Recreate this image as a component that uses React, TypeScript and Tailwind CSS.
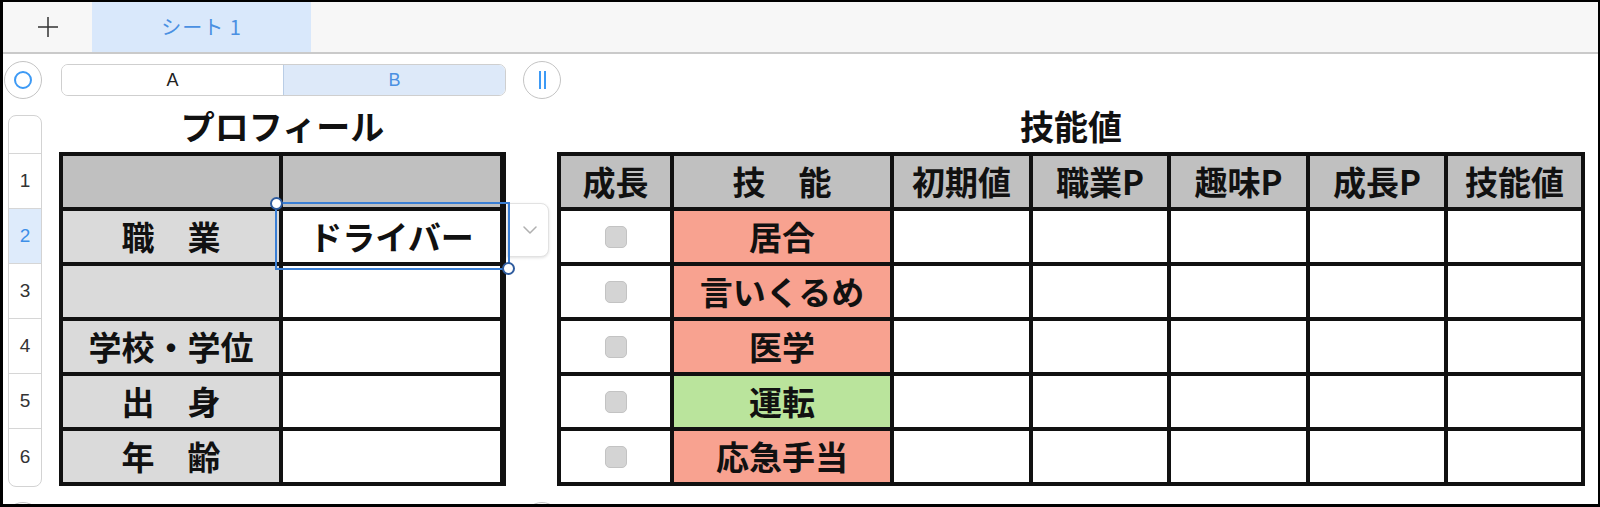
import React from 'react';

const JP = { fontFamily: '"Noto Sans CJK JP", "Noto Sans", sans-serif' };

const PROFILE_LABELS = ['', '職　業', '', '学校・学位', '出　身', '年　齢'];

const SKILL_HEADERS = ['成長', '技　能', '初期値', '職業P', '趣味P', '成長P', '技能値'];

const SKILLS: { name: string; color: string }[] = [
  { name: '居合', color: 'bg-[#f8a290]' },
  { name: '言いくるめ', color: 'bg-[#f8a290]' },
  { name: '医学', color: 'bg-[#f8a290]' },
  { name: '運転', color: 'bg-[#bae49c]' },
  { name: '応急手当', color: 'bg-[#f8a290]' },
];

function Cell({ className = '', children }: { className?: string; children?: React.ReactNode }) {
  return (
    <div className={`flex items-center justify-center text-[33px] font-bold leading-none text-[#111] ${className}`}>
      {children}
    </div>
  );
}

function RowHeader() {
  return (
    <div className="ml-[5px] mt-[9px] w-[34px] rounded-[8px] border border-[#d3d3d3] bg-white flex flex-col overflow-hidden">
      <div className="h-[37px]" />
      {[1, 2, 3, 4, 5, 6].map(n => (
        <div
          key={n}
          className={`flex items-center justify-center border-t border-[#d6d6d6] text-[19px] ${
            n === 6 ? 'h-[58px]' : 'h-[55px]'
          } ${n === 2 ? 'bg-[#deebfb] text-[#3d8fe8]' : 'text-[#333]'}`}
          style={{ fontFamily: '"Liberation Sans", sans-serif' }}
        >
          {n}
        </div>
      ))}
    </div>
  );
}

function ProfileTable() {
  return (
    <div className="ml-[17px] w-[447px] flex flex-col">
      <div className="h-[46px] flex items-center justify-center pb-[8px] text-[34px] font-bold text-[#111]">プロフィール</div>
      <div className="relative">
        <div className="grid grid-cols-[216px_217px] auto-rows-[51px] gap-[4px] p-[4px] bg-[#111]">
          {PROFILE_LABELS.map((label, i) => (
            <React.Fragment key={i}>
              <Cell className={i === 0 ? 'bg-[#c0c0c0]' : 'bg-[#dadada]'}>{label}</Cell>
              <Cell className={i === 0 ? 'bg-[#c0c0c0]' : 'bg-white'}>{i === 1 ? 'ドライバー' : ''}</Cell>
            </React.Fragment>
          ))}
        </div>

        {/* dropdown button beside the selected cell */}
        <div className="absolute left-[448px] top-[51px] w-[42px] h-[54px] bg-white rounded-r-[8px] border border-[#e2e2e2] shadow-[0_1px_3px_rgba(0,0,0,0.12)] flex items-center justify-center pl-[4px]">
          <svg width="14" height="8" viewBox="0 0 14 8" fill="none">
            <path d="M1 1l6 6 6-6" stroke="#b0b0b0" strokeWidth="1.5" strokeLinecap="round" strokeLinejoin="round" />
          </svg>
        </div>

        {/* selection */}
        <div className="absolute left-[216px] top-[50px] w-[235px] h-[68px] border-2 border-[#3a7fd5]">
          <div className="absolute -left-[7px] -top-[7px] w-[13px] h-[13px] rounded-full bg-white border-2 border-[#2f5c9e]" />
          <div className="absolute -right-[7px] -bottom-[7px] w-[13px] h-[13px] rounded-full bg-white border-2 border-[#2f5c9e]" />
        </div>
      </div>
    </div>
  );
}

function SkillTable() {
  return (
    <div className="ml-[51px] w-[1028px] flex flex-col">
      <div className="h-[46px] flex items-center justify-center pb-[8px] text-[34px] font-bold text-[#111]">技能値</div>
      <div className="grid grid-cols-[109px_216px_135px_134px_135px_134px_133px] auto-rows-[51px] gap-[4px] p-[4px] bg-[#111]">
        {SKILL_HEADERS.map(h => (
          <Cell key={h} className="bg-[#c0c0c0]">{h}</Cell>
        ))}
        {SKILLS.map(skill => (
          <React.Fragment key={skill.name}>
            <Cell className="bg-white">
              <div className="w-[22px] h-[22px] rounded-[5px] bg-[#d4d4d4] border border-[#c3c3c3]" />
            </Cell>
            <Cell className={skill.color}>{skill.name}</Cell>
            {[0, 1, 2, 3, 4].map(k => (
              <Cell key={k} className="bg-white" />
            ))}
          </React.Fragment>
        ))}
      </div>
    </div>
  );
}

function CircleButton({ children }: { children?: React.ReactNode }) {
  return (
    <div className="w-[38px] h-[38px] rounded-full border-[1.5px] border-[#c4c4c4] bg-white flex items-center justify-center">
      {children}
    </div>
  );
}

export default function App() {
  return (
    <div className="w-[1600px] h-[507px] bg-black pt-[2px] pl-[3px] pr-[2px] pb-[3px] overflow-hidden" style={JP}>
      <div className="relative h-full bg-white overflow-hidden">
        {/* sheet tabs */}
        <div className="h-[52px] flex bg-[#f7f7f7] border-b-2 border-[#cacaca]">
          <div className="w-[89px] flex items-center justify-center">
            <svg width="22" height="22" viewBox="0 0 22 22">
              <path d="M11 1v20M1 11h20" stroke="#333" strokeWidth="1.5" />
            </svg>
          </div>
          <div className="w-[219px] bg-[#d9e8fb] flex items-center justify-center text-[20px] tracking-[1px] text-[#4a90e2]">シート 1</div>
        </div>

        {/* column headers */}
        <div className="h-[52px] flex items-center pl-[1px]">
          <CircleButton>
            <div className="w-[18px] h-[18px] rounded-full border-2 border-[#3d9af5]" />
          </CircleButton>
          <div
            className="ml-[19px] w-[445px] h-[32px] flex rounded-[7px] border border-[#cfcfcf] overflow-hidden text-[18px]"
            style={{ fontFamily: '"Liberation Sans", sans-serif' }}
          >
            <div className="w-[221px] flex items-center justify-center text-[#222] bg-white">A</div>
            <div className="flex-1 flex items-center justify-center text-[#4a90e2] bg-[#dde9f9] border-l border-[#b9cde6]">B</div>
          </div>
          <div className="ml-[17px]">
            <CircleButton>
              <div className="flex gap-[3px]">
                <div className="w-[2px] h-[18px] bg-[#3d9af5]" />
                <div className="w-[2px] h-[18px] bg-[#3d9af5]" />
              </div>
            </CircleButton>
          </div>
        </div>

        {/* sheet body */}
        <div className="flex items-start">
          <RowHeader />
          <ProfileTable />
          <SkillTable />
        </div>

        <div className="absolute left-[1px] top-[500px]">
          <CircleButton />
        </div>
        <div className="absolute left-[520px] top-[500px]">
          <CircleButton />
        </div>
      </div>
    </div>
  );
}
